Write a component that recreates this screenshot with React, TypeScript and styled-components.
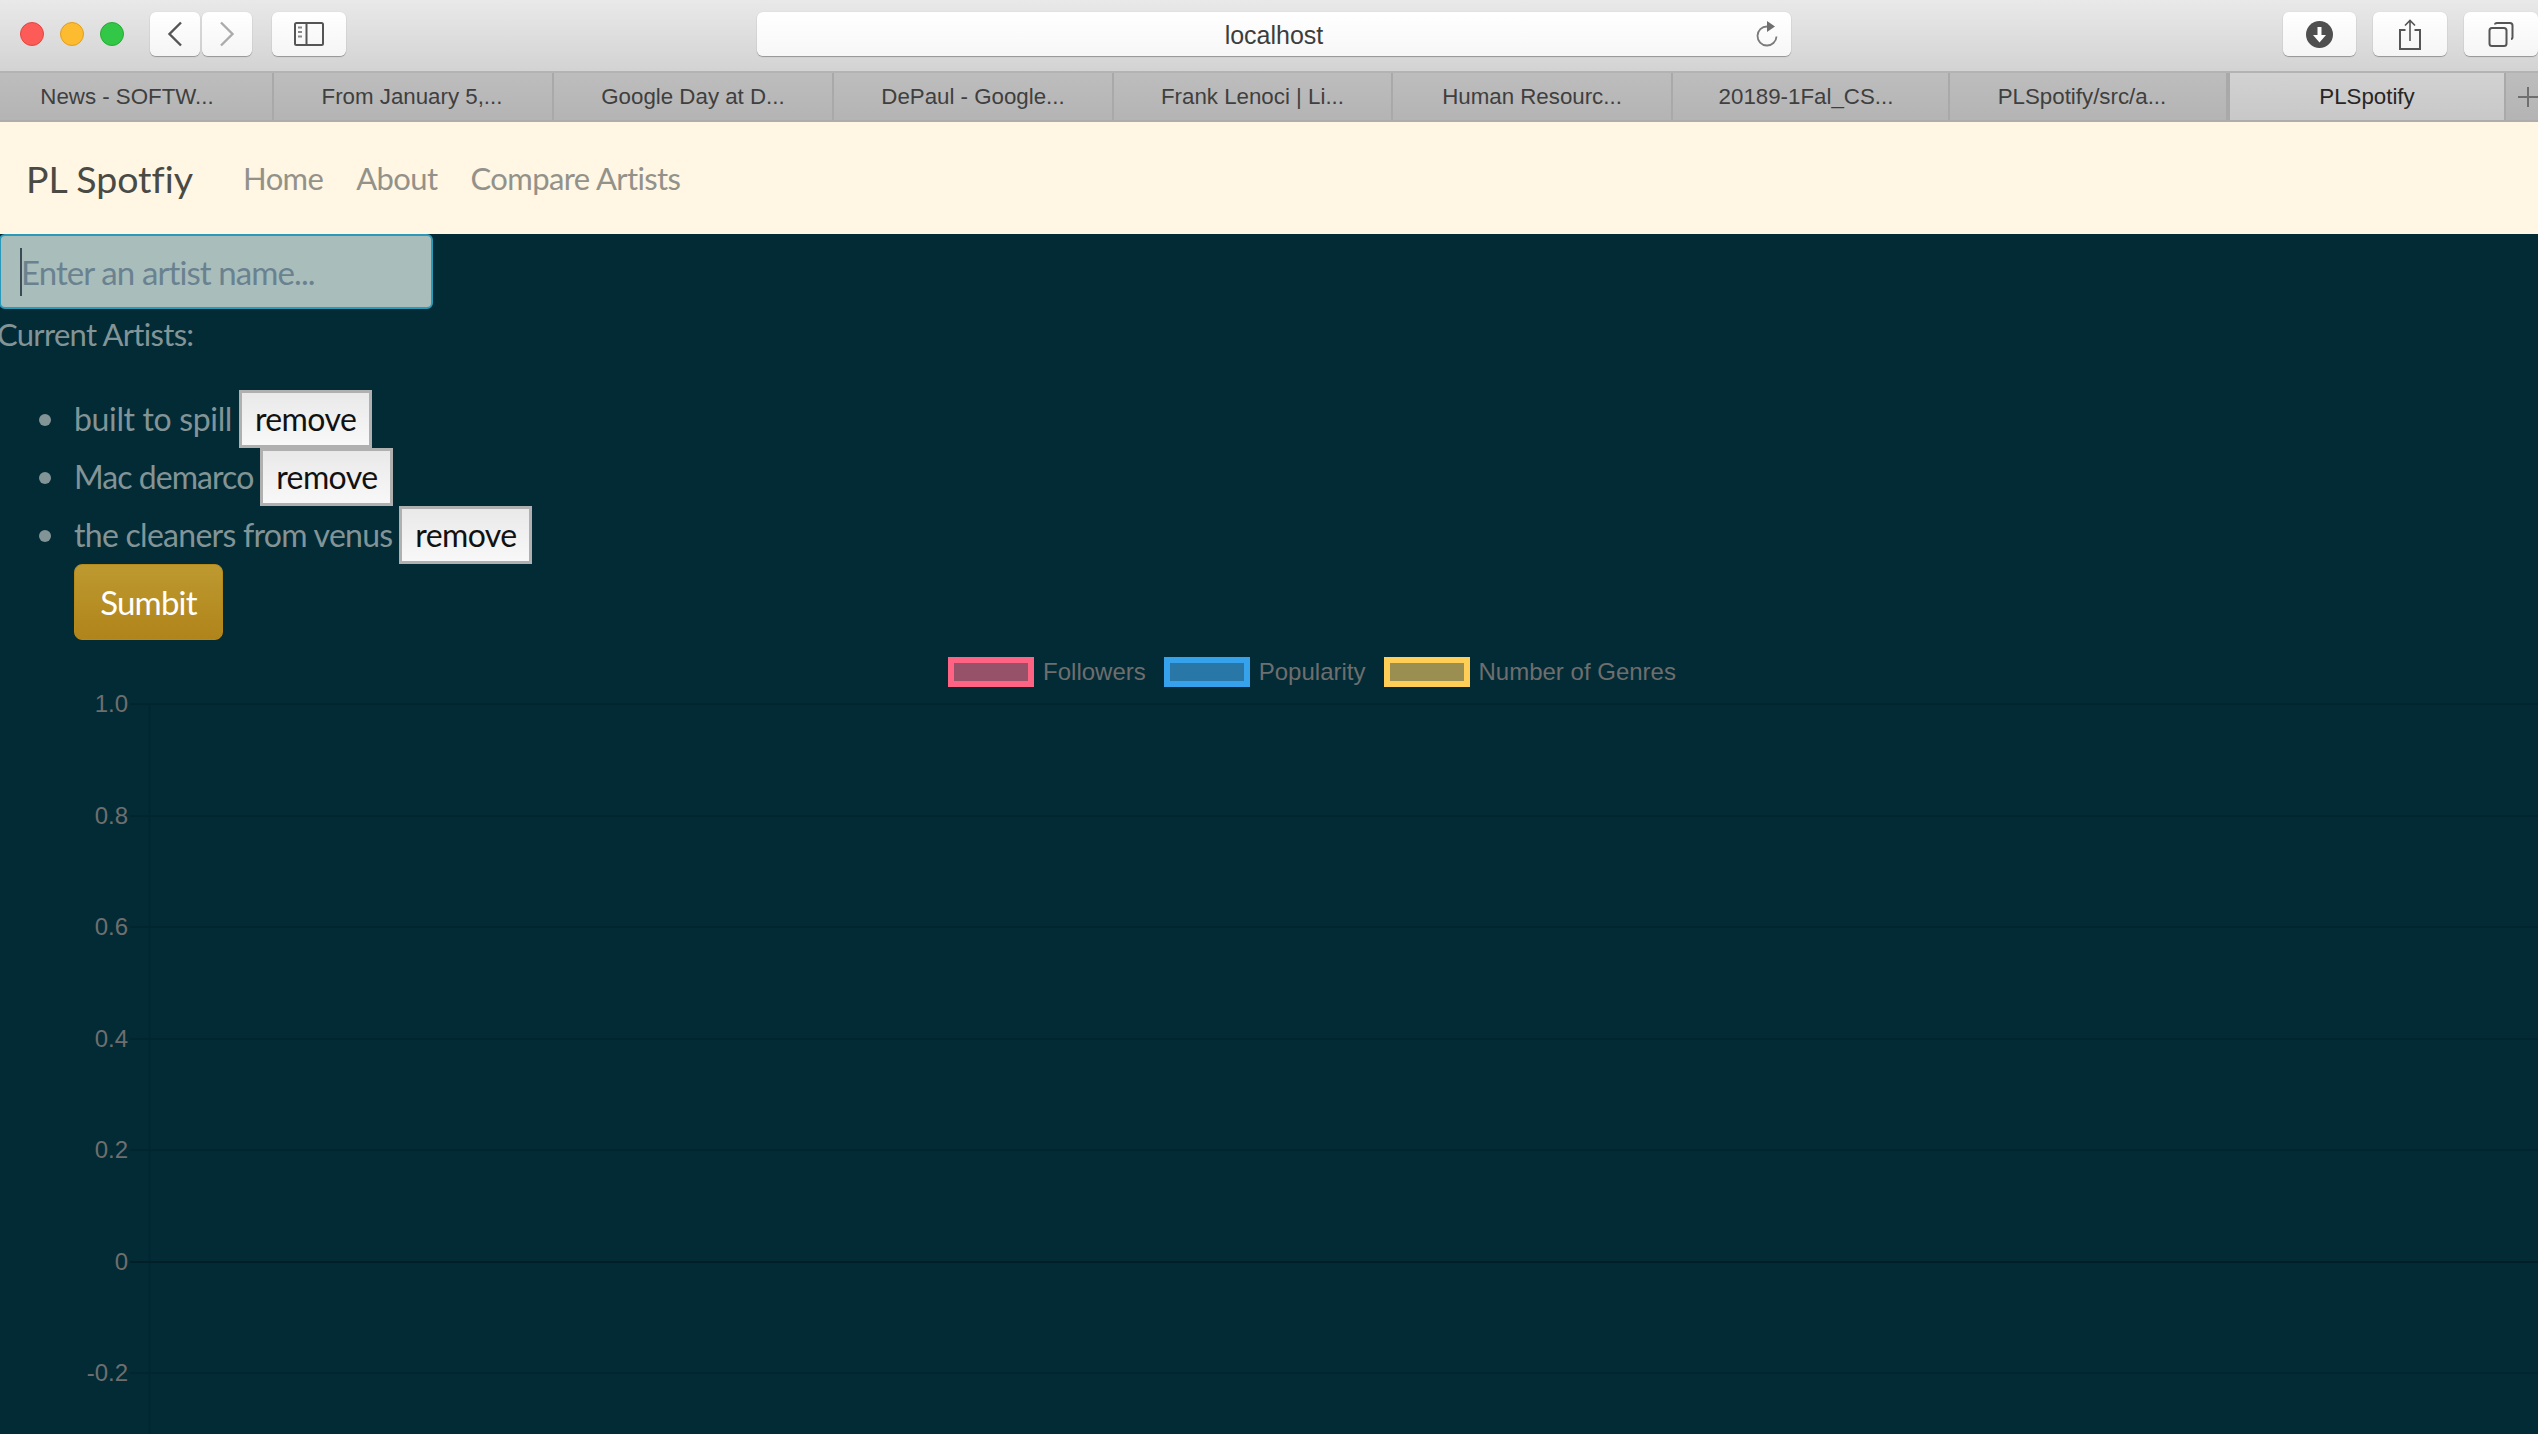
import React from 'react';
import styled, { createGlobalStyle } from 'styled-components';

const GlobalStyle = createGlobalStyle`
  html, body {
    margin: 0;
    padding: 0;
    height: 100%;
    background-color: #022b36;
    overflow: hidden;
  }
  * {
    box-sizing: border-box;
  }
`;

const Page = styled.div`
  width: 2538px;
  height: 1434px;
  overflow: hidden;
  display: flex;
  flex-direction: column;
  font-family: 'Lato', 'Noto Sans', sans-serif;
  font-variant-ligatures: none;
`;

const Toolbar = styled.div`
  height: 71px;
  flex: none;
  display: flex;
  align-items: flex-start;
  padding: 12px 0 0 20px;
  background: linear-gradient(#e9e9e9, #d3d3d3);
`;

const TrafficLights = styled.div`
  display: flex;
  gap: 16px;
  margin: 10px 26px 0 0;
`;

const Light = styled.span<{ $color: string; $edge: string }>`
  width: 24px;
  height: 24px;
  border-radius: 50%;
  background-color: ${(p) => p.$color};
  border: 1px solid ${(p) => p.$edge};
`;

const NavGroup = styled.div`
  display: flex;
  gap: 2px;
  margin-right: 20px;
`;

const ToolButton = styled.div<{ $width: number }>`
  width: ${(p) => p.$width}px;
  height: 44px;
  display: flex;
  align-items: center;
  justify-content: center;
  background: linear-gradient(#ffffff, #f5f5f5);
  border-radius: 6px;
  box-shadow: 0 1px 1px rgba(0, 0, 0, 0.3), 0 0 1px rgba(0, 0, 0, 0.18);
`;

const UrlBar = styled.div`
  position: relative;
  width: 1035px;
  height: 44px;
  margin: 0 492px 0 411px;
  padding-top: 2px;
  display: flex;
  align-items: center;
  justify-content: center;
  background: linear-gradient(#ffffff, #f7f7f7);
  border-radius: 6px;
  box-shadow: 0 1px 1px rgba(0, 0, 0, 0.3), 0 0 1px rgba(0, 0, 0, 0.18);
  font-family: 'Liberation Sans', Arial, sans-serif;
  font-size: 25px;
  color: #3d3d3d;
`;

const ReloadIcon = styled.svg`
  position: absolute;
  right: 13px;
  top: 9px;
`;

const RightTools = styled.div`
  display: flex;
  gap: 17px;
`;

const TabStrip = styled.div`
  height: 51px;
  flex: none;
  display: flex;
  border-top: 2px solid #b3b3b3;
  border-bottom: 2px solid #adadad;
  background: linear-gradient(#bdbdbd, #b4b4b4);
  font-family: 'Liberation Sans', Arial, sans-serif;
  font-size: 22.3px;
  color: #3f3f3f;
`;

const Tab = styled.div<{ $width: number; $inset?: number; $active?: boolean }>`
  width: ${(p) => p.$width}px;
  flex: none;
  display: flex;
  align-items: center;
  justify-content: center;
  padding-right: ${(p) => p.$inset ?? 0}px;
  white-space: nowrap;
  border-right: 2px solid #a9a9a9;
  ${(p) =>
    p.$active &&
    `
    background: linear-gradient(#d2d2d2, #c8c8c8);
    color: #262626;
    border-left: 2px solid #a9a9a9;
    border-right: 2px solid #a9a9a9;
  `}
`;

const NewTab = styled.div`
  flex: 1;
  display: flex;
  align-items: center;
  justify-content: center;
  padding-left: 12px;
`;

const Navbar = styled.nav`
  height: 112px;
  flex: none;
  display: flex;
  align-items: center;
  padding-left: 26px;
  background-color: #fff6e4;
`;

const Brand = styled.a`
  font-size: 37.5px;
  color: #4a4a44;
  margin-right: 50px;
`;

const NavLink = styled.a`
  font-size: 31px;
  letter-spacing: -0.6px;
  color: #93928a;
  margin-right: 33px;
`;

const Content = styled.main`
  flex: 1;
  display: flex;
  flex-direction: column;
  background-color: #022b36;
  color: #839496;
  font-size: 31px;
`;

const SearchInput = styled.div`
  width: 434px;
  height: 75px;
  margin-left: -1px;
  padding-left: 19px;
  display: flex;
  align-items: center;
  background-color: #a9bdbb;
  border: 2px solid #2a9ab8;
  border-radius: 6px;
  color: #6a8290;
  font-size: 33px;
  letter-spacing: -0.9px;
`;

const Caret = styled.span`
  width: 2px;
  height: 48px;
  margin-right: -1px;
  flex: none;
  background-color: #3c4a55;
`;

const CurrentLabel = styled.p`
  margin: 1px 0 0 -3px;
  height: 48px;
  line-height: 48px;
  font-size: 31px;
  letter-spacing: -0.7px;
`;

const ArtistList = styled.ul`
  margin: 32px 0 0;
  padding: 0 0 0 74px;
  list-style: none;
`;

const ArtistRow = styled.li<{ $tracking: number }>`
  position: relative;
  height: 58px;
  line-height: 58px;
  font-size: 32px;
  letter-spacing: ${(p) => p.$tracking}px;
  white-space: nowrap;
  &::before {
    content: '';
    position: absolute;
    left: -35px;
    top: 24px;
    width: 12px;
    height: 12px;
    border-radius: 50%;
    background-color: #839496;
  }
`;

const RemoveButton = styled.button`
  height: 58px;
  width: 133px;
  margin-left: 7px;
  padding: 0 0 2px;
  vertical-align: top;
  border: 3px solid #b0b0b0;
  background: linear-gradient(#e9e9e9, #f8f8f8);
  color: #111;
  font-family: 'Lato', 'Noto Sans', sans-serif;
  font-size: 32px;
  letter-spacing: -0.6px;
`;

const SubmitButton = styled.button`
  display: block;
  width: 149px;
  height: 76px;
  padding: 0;
  border: 1px solid #b58a18;
  border-radius: 8px;
  background: linear-gradient(#bd9a30, #b0841a);
  color: #fff;
  font-family: 'Lato', 'Noto Sans', sans-serif;
  font-size: 33px;
  letter-spacing: -0.8px;
`;

const Chart = styled.section`
  flex: 1;
  display: flex;
  flex-direction: column;
  padding-top: 17px;
`;

const Legend = styled.div`
  height: 30px;
  flex: none;
  display: flex;
  justify-content: center;
  padding-left: 86px;
  font-family: 'Liberation Sans', Arial, sans-serif;
  font-size: 24px;
  line-height: 30px;
  color: #6e6e6e;
`;

const LegendItem = styled.div`
  display: flex;
  margin-right: 18px;
  &:last-child {
    margin-right: 0;
  }
`;

const Swatch = styled.span<{ $color: string; $fill: string }>`
  width: 86px;
  height: 30px;
  margin-right: 9px;
  border: 6px solid ${(p) => p.$color};
  background-color: ${(p) => p.$fill};
`;

const Plot = styled.svg`
  display: block;
  flex: 1;
`;

const tabs = [
  { title: 'News - SOFTW...', width: 274, inset: 18 },
  { title: 'From January 5,...', width: 280, inset: 2 },
  { title: 'Google Day at D...', width: 280 },
  { title: 'DePaul - Google...', width: 280 },
  { title: 'Frank Lenoci | Li...', width: 279 },
  { title: 'Human Resourc...', width: 280 },
  { title: '20189-1Fal_CS...', width: 277, inset: 9 },
  { title: 'PLSpotify/src/a...', width: 278, inset: 12 },
];

const artists = [
  { name: 'built to spill', tracking: -0.35 },
  { name: 'Mac demarco', tracking: -0.95 },
  { name: 'the cleaners from venus', tracking: -0.72 },
];

const legend = [
  { label: 'Followers', color: '#ff6384', fill: '#965268' },
  { label: 'Popularity', color: '#36a2eb', fill: '#2877a6' },
  { label: 'Number of Genres', color: '#ffce56', fill: '#9a8e50' },
];

const ticks = ['1.0', '0.8', '0.6', '0.4', '0.2', '0', '-0.2'];

const App: React.FC = () => (
  <Page>
    <GlobalStyle />
    <Toolbar>
      <TrafficLights>
        <Light $color="#fc5b57" $edge="#e2463f" />
        <Light $color="#fdbb2f" $edge="#e09e1f" />
        <Light $color="#33c748" $edge="#27aa35" />
      </TrafficLights>
      <NavGroup>
        <ToolButton $width={50}>
          <svg width="16" height="26" viewBox="0 0 16 26" fill="none" stroke="#555" strokeWidth="2.4">
            <path d="M14 1.5 2.5 13 14 24.5" />
          </svg>
        </ToolButton>
        <ToolButton $width={50}>
          <svg width="16" height="26" viewBox="0 0 16 26" fill="none" stroke="#ababab" strokeWidth="2.4">
            <path d="M2 1.5 13.5 13 2 24.5" />
          </svg>
        </ToolButton>
      </NavGroup>
      <ToolButton $width={74}>
        <svg width="30" height="24" viewBox="0 0 30 24" fill="none" stroke="#555" strokeWidth="2">
          <rect x="1" y="1" width="28" height="22" rx="1.5" />
          <path d="M12.5 1v22" />
          <path d="M4 5.5h4M4 10h4M4 14.500h4" strokeWidth="2.200" stroke="#888" />
        </svg>
      </ToolButton>
      <UrlBar>
        localhost
        <ReloadIcon width="24" height="26" viewBox="0 0 24 26" fill="none">
          <path d="M13 5.500a9.500 9.500 0 1 0 9.500 10" stroke="#7a7a7a" strokeWidth="1.800" />
          <path d="M13 0v11l8-5.500z" fill="#6f6f6f" />
        </ReloadIcon>
      </UrlBar>
      <RightTools>
        <ToolButton $width={73}>
          <svg width="27" height="27" viewBox="0 0 27 27">
            <circle cx="13.500" cy="13.500" r="13.500" fill="#4f4f4f" />
            <path d="M11.500 6h4v8h4.500l-6.500 7.500L7 14h4.500z" fill="#fff" />
          </svg>
        </ToolButton>
        <ToolButton $width={74}>
          <svg width="24" height="31" viewBox="0 0 24 31" fill="none" stroke="#555" strokeWidth="2">
            <path d="M7.500 11H2v19h20V11h-5.500" />
            <path d="M12 22V1.500M7 6.500l5-5 5 5" strokeWidth="1.600" />
          </svg>
        </ToolButton>
        <ToolButton $width={74}>
          <svg width="26" height="25" viewBox="0 0 26 25" fill="none" stroke="#555" strokeWidth="2">
            <rect x="1.500" y="6" width="17" height="18" rx="2.500" />
            <path d="M7 2.500C7 1.500 8 1 9 1h13c1.500 0 2.500 1 2.500 2.500V15c0 1-.5 2-1.500 2" />
          </svg>
        </ToolButton>
      </RightTools>
    </Toolbar>
    <TabStrip>
      {tabs.map((tab) => (
        <Tab key={tab.title} $width={tab.width} $inset={tab.inset}>
          {tab.title}
        </Tab>
      ))}
      <Tab $width={278} $active>
        PLSpotify
      </Tab>
      <NewTab>
        <svg width="20" height="20" viewBox="0 0 20 20" stroke="#6f6f6f" strokeWidth="2">
          <path d="M10 0v20M0 10h20" />
        </svg>
      </NewTab>
    </TabStrip>
    <Navbar>
      <Brand>PL Spotfiy</Brand>
      <NavLink>Home</NavLink>
      <NavLink>About</NavLink>
      <NavLink>Compare Artists</NavLink>
    </Navbar>
    <Content>
      <SearchInput>
        <Caret />
        Enter an artist name...
      </SearchInput>
      <CurrentLabel>Current Artists:</CurrentLabel>
      <ArtistList>
        {artists.map((artist) => (
          <ArtistRow key={artist.name} $tracking={artist.tracking}>
            {artist.name}
            <RemoveButton>remove</RemoveButton>
          </ArtistRow>
        ))}
        <SubmitButton>Sumbit</SubmitButton>
      </ArtistList>
      <Chart>
        <Legend>
          {legend.map((item) => (
            <LegendItem key={item.label}>
              <Swatch $color={item.color} $fill={item.fill} />
              {item.label}
            </LegendItem>
          ))}
        </Legend>
        <Plot width="2538" height="747" viewBox="0 0 2538 747">
          <path d="M149.500 17V747" stroke="#02262f" strokeWidth="1.500" />
          {ticks.map((tick, i) => {
            const y = Math.round(17 + i * 111.5);
            return (
              <g key={tick}>
                <line
                  x1="130"
                  x2="2538"
                  y1={y}
                  y2={y}
                  stroke={tick === '0' ? '#011c25' : '#02262f'}
                  strokeWidth="1.500"
                />
                <text
                  x="128"
                  y={y + 8}
                  textAnchor="end"
                  fill="#6e6e6e"
                  fontFamily="'Liberation Sans', Arial, sans-serif"
                  fontSize="24"
                >
                  {tick}
                </text>
              </g>
            );
          })}
        </Plot>
      </Chart>
    </Content>
  </Page>
);

export default App;
